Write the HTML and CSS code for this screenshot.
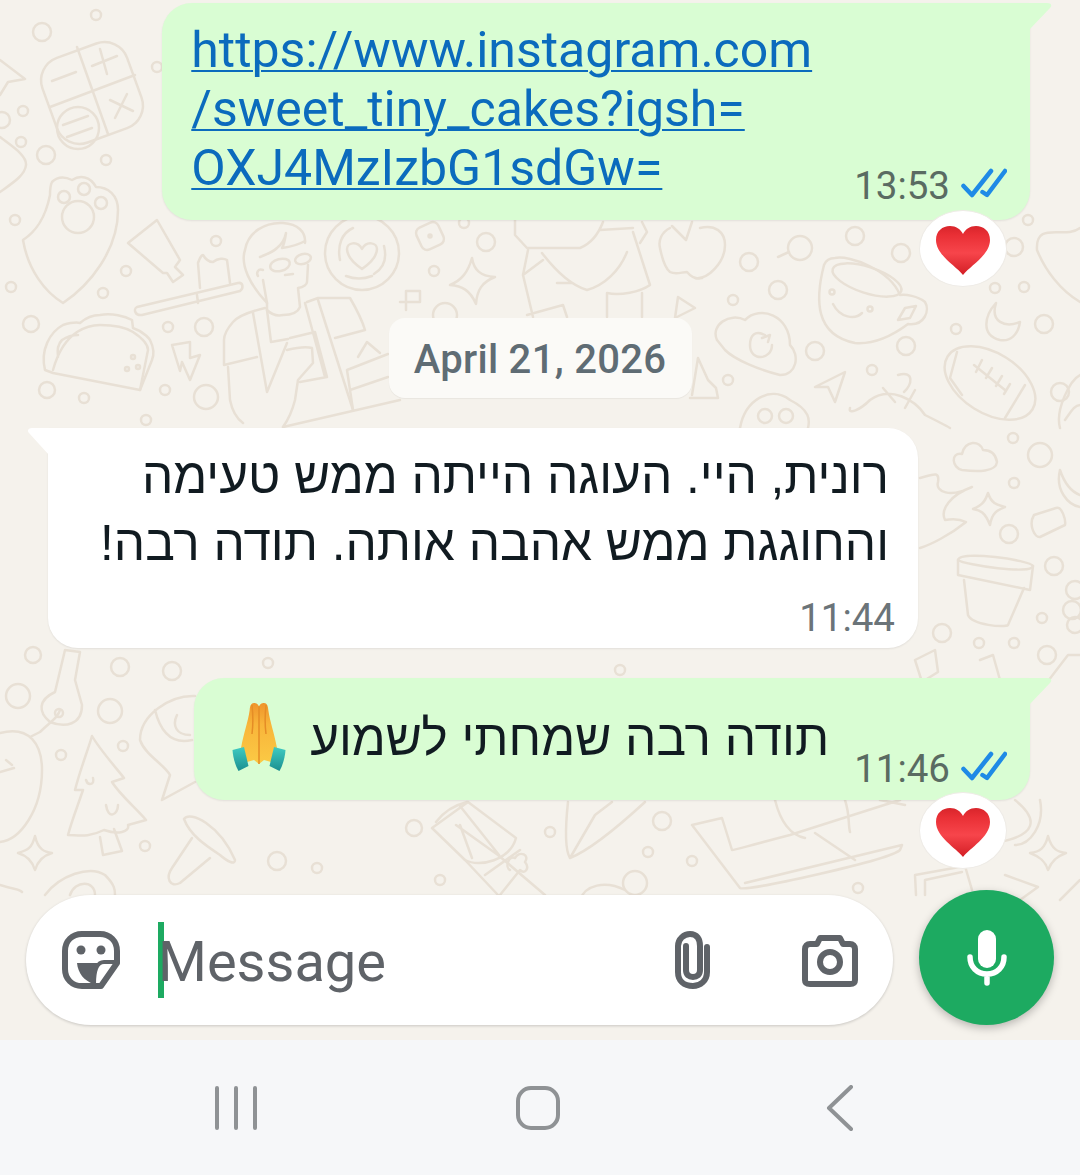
FILE: index.html
```html
<!DOCTYPE html>
<html lang="en">
<head>
    <meta charset="UTF-8">
    <meta name="viewport" content="width=device-width, initial-scale=1.0">
    <title>Chat</title>
    <link rel="stylesheet" href="styles.css">
</head>
<body>
    <!-- Shared emoji -->
    <svg class="defs" width="0" height="0">
        <defs>
            <linearGradient id="heartFill" x1="0" y1="0" x2="0" y2="1">
                <stop offset="0" stop-color="#d8252b"/>
                <stop offset="0.18" stop-color="#e92f35"/>
                <stop offset="0.55" stop-color="#f7454b"/>
                <stop offset="1" stop-color="#d31e25"/>
            </linearGradient>
            <linearGradient id="handFill" x1="0" y1="0" x2="0" y2="1">
                <stop offset="0" stop-color="#ef942b"/>
                <stop offset="0.35" stop-color="#f8b53a"/>
                <stop offset="1" stop-color="#fbca45"/>
            </linearGradient>
            <linearGradient id="cuffFill" x1="0" y1="0" x2="0" y2="1">
                <stop offset="0" stop-color="#3fcbc2"/>
                <stop offset="1" stop-color="#1c8f90"/>
            </linearGradient>
            <symbol id="heart" viewBox="0 0 56 50">
                <path fill="url(#heartFill)" d="M28 50C21 41 1 30 1 15C1 6 7.500 1 15 1C21 1 25.500 4 28 9C30.500 4 35 1 41 1C48.500 1 55 6 55 15C55 30 35 41 28 50Z"/>
            </symbol>
            <symbol id="ticks" viewBox="0 0 46 30">
                <path fill="none" stroke="#1f8ae6" stroke-width="4.500" stroke-linecap="round" stroke-linejoin="round" d="M2.500 18L11 27L30 3M21.500 24L26 27L44 3"/>
            </symbol>
        </defs>
    </svg>

    <div class="phone">
        <main class="chat">
            <!-- Wallpaper doodles -->
            <svg class="wallpaper" viewBox="0 0 1080 1040" width="1080" height="1040">
                <g class="dots">
                    <circle cx="42" cy="32" r="9"/><circle cx="96" cy="15" r="5"/><circle cx="23" cy="111" r="5"/><circle cx="21" cy="142" r="5"/><circle cx="46" cy="155" r="9"/><circle cx="106" cy="160" r="5"/><circle cx="157" cy="67" r="5"/><circle cx="2" cy="120" r="8"/>
                    <circle cx="15" cy="220" r="5"/><circle cx="11" cy="287" r="5"/><circle cx="103" cy="293" r="5"/><circle cx="126" cy="271" r="5"/><circle cx="216" cy="241" r="5"/><circle cx="31" cy="324" r="8"/><circle cx="168" cy="327" r="5"/><circle cx="204" cy="327" r="9"/><circle cx="47" cy="390" r="8"/><circle cx="84" cy="398" r="5"/><circle cx="165" cy="390" r="5"/><circle cx="206" cy="397" r="12"/><circle cx="146" cy="420" r="5"/><circle cx="78" cy="217" r="16"/>
                    <circle cx="749" cy="262" r="9"/><circle cx="855" cy="236" r="9"/><circle cx="800" cy="248" r="12"/><circle cx="901" cy="253" r="9"/><circle cx="1014" cy="247" r="9"/><circle cx="1028" cy="220" r="5"/><circle cx="778" cy="290" r="9"/><circle cx="733" cy="300" r="5"/><circle cx="995" cy="288" r="5"/><circle cx="1024" cy="287" r="5"/><circle cx="956" cy="329" r="5"/><circle cx="1044" cy="324" r="9"/><circle cx="815" cy="351" r="9"/><circle cx="906" cy="346" r="9"/><circle cx="872" cy="370" r="5"/><circle cx="728" cy="380" r="5"/><circle cx="1060" cy="392" r="9"/>
                    <circle cx="33" cy="655" r="8"/><circle cx="18" cy="696" r="12"/><circle cx="120" cy="667" r="9"/><circle cx="172" cy="671" r="9"/><circle cx="268" cy="663" r="5"/><circle cx="110" cy="711" r="12"/><circle cx="123" cy="746" r="5"/><circle cx="61" cy="755" r="5"/><circle cx="145" cy="846" r="5"/><circle cx="277" cy="861" r="9"/><circle cx="317" cy="868" r="5"/>
                    <circle cx="414" cy="828" r="8"/><circle cx="550" cy="832" r="5"/><circle cx="662" cy="821" r="9"/><circle cx="648" cy="852" r="5"/><circle cx="692" cy="861" r="5"/><circle cx="440" cy="880" r="5"/><circle cx="635" cy="883" r="12"/><circle cx="858" cy="888" r="5"/>
                    <circle cx="1040" cy="455" r="12"/><circle cx="1013" cy="438" r="5"/><circle cx="1014" cy="483" r="5"/><circle cx="1009" cy="534" r="9"/><circle cx="1054" cy="566" r="9"/><circle cx="942" cy="633" r="9"/><circle cx="1042" cy="618" r="5"/><circle cx="979" cy="643" r="5"/><circle cx="1014" cy="643" r="5"/><circle cx="1047" cy="655" r="9"/>
                    <circle cx="1075" cy="590" r="9"/><circle cx="1072" cy="610" r="9"/><circle cx="1075" cy="625" r="8"/>
                    <circle cx="480" cy="690" r="9"/><circle cx="620" cy="670" r="5"/>
                    <circle cx="486" cy="242" r="9"/><circle cx="464" cy="223" r="5"/><circle cx="434" cy="271" r="5"/><circle cx="445" cy="315" r="12"/>
                </g>
                <!-- calculator -->
                <rect x="47" y="48" width="90" height="90" rx="24" transform="rotate(-20 92 93)"/>
                <path d="M77 47L108 134M50 107L135 75M52 81L76 72M92 66L117 56M100 49L107 74M110 100L133 111M115 118L127 94M63 125L88 116M67 137L92 128"/>
                <circle cx="78" cy="128" r="21"/>
                <!-- paw + shield -->
                <path d="M50 195C45 220 35 232 23 240C28 270 45 292 63 303C90 285 118 250 118 210C118 195 108 187 96 187C90 176 80 175 72 180C66 177 58 176 52 182C50 186 50 190 50 195Z"/>
                <circle cx="64" cy="197" r="6"/><circle cx="84" cy="189" r="6"/><circle cx="101" cy="203" r="6"/>
                <path d="M0 192C14 182 25 175 26 165C27 155 10 145 0 137M0 60L25 79L8 82L0 95"/>
                <!-- tube and tray -->
                <path d="M128 243L157 220L180 260L175 267L183 275L173 282L167 273L163 273Z"/>
                <path d="M137 307L238 283C243 282 244 288 240 291L142 315C135 316 133 309 137 307ZM197 295L198 303"/>
                <path d="M200 288L198 263C200 257 202 255 203 255C206 260 209 262 213 262C218 258 224 258 227 260L230 283"/>
                <!-- person -->
                <path d="M267 303C250 285 240 265 245 250C248 232 265 222 283 223C298 224 306 232 305 243"/>
                <path d="M260 257C268 254 273 252 277 248C282 244 285 238 286 233C285 240 284 245 282 248C290 247 298 245 305 241"/>
                <ellipse cx="280" cy="265" rx="10" ry="6" transform="rotate(-15 280 265)"/>
                <ellipse cx="303" cy="259" rx="8" ry="5" transform="rotate(-15 303 259)"/>
                <path d="M263 280L267 303V310C272 315 278 316 283 315C292 315 298 312 300 307L298 288C304 287 307 284 307 282L308 265M285 275L293 274M263 270C258 268 256 273 258 276"/>
                <path d="M265 308C248 312 238 316 233 322C226 330 224 335 224 340V365L257 357M228 367L230 400C232 410 236 418 243 423M253 313L267 392L287 343M267 310L271 342L288 339"/>
                <path d="M290 338L315 332L327 377L300 382M287 350C295 348 305 346 312 348L313 363L298 380L295 400C292 412 288 420 283 427M307 302L318 298H350C357 310 362 320 365 330L335 338M318 300L353 410M305 303L325 377"/>
                <path d="M347 370L388 354M350 390L388 377M283 427L400 400M347 370L353 410M358 357L367 342L380 353"/>
                <!-- latte heart -->
                <circle cx="362" cy="253" r="37"/>
                <path d="M362 269C352 262 347 255 347 249C347 243 357 240 362 249C367 240 377 243 377 249C377 255 372 262 362 269ZM340 260C337 245 342 233 353 228M384 246C387 258 384 268 374 274M346 276C354 279 364 279 372 276"/>
                <!-- taco -->
                <path d="M45 370C40 350 50 332 63 325C70 323 76 322 80 323C88 316 95 315 100 315C112 313 125 316 132 320L133 328C145 332 150 340 150 340C154 348 154 355 152 360L140 390L53 373Z"/>
                <path d="M53 370C58 352 65 340 77 332C85 327 92 325 100 325C115 325 125 327 133 332C142 338 148 345 148 350L140 390M58 357C57 350 58 344 62 340C68 336 74 335 78 335"/>
                <circle cx="133" cy="357" r="2"/><circle cx="127" cy="369" r="2"/><circle cx="138" cy="367" r="2"/>
                <path d="M172 345L190 342L190 358L200 355L190 380L182 362L180 371Z"/>
                <!-- middle of the wall -->
                <rect x="418" y="224" width="24" height="24" rx="6" transform="rotate(-25 430 236)"/>
                <circle cx="430" cy="236" r="1.500"/>
                <path d="M472 258C474 270 480 276 495 277C482 282 477 290 476 304C470 290 462 286 450 285C462 280 468 272 472 258Z"/>
                <path d="M400 302H420V291H406V310"/>
                <path d="M515 220V235L527 248H560L580 248C590 244 598 235 603 222M528 250L523 275L533 317M543 260L523 275M542 253C555 270 570 285 587 290C605 285 620 270 627 252M557 283H572M633 232L650 285C640 292 620 296 607 293V317M642 293V317M600 230L633 228M642 222L647 232L640 243M527 315L563 305L567 317"/>
                <path d="M670 228C662 232 658 240 660 248C662 258 665 268 670 272C676 275 682 272 687 272C692 278 698 279 702 278M672 226L686 240L692 222"/>
                <path d="M678 297L695 308L675 318Z"/>
                <!-- cup, cloud, moon, football -->
                <path d="M700 228C715 224 725 232 725 245C725 262 708 280 695 278"/>
                <path d="M778 257L789 252"/>
                <path d="M824 265C815 300 815 335 855 343C880 345 900 330 908 324C925 326 930 310 925 302C918 296 905 294 900 295C890 270 850 255 835 258C830 258 826 260 824 265Z"/>
                <ellipse cx="867" cy="280" rx="36" ry="13" transform="rotate(18 867 280)"/>
                <circle cx="832" cy="292" r="2.500"/><circle cx="870" cy="309" r="2.500"/>
                <path d="M833 304C840 318 855 320 862 313M898 320L905 308L916 306L910 318Z"/>
                <path d="M717 340C710 325 730 312 745 320C760 305 790 315 790 345C800 355 797 375 780 375C760 370 735 360 725 350Z"/>
                <path d="M772 345C772 360 750 362 750 345C750 335 755 330 765 335M762 338L770 335L768 342"/>
                <path d="M996 303C985 315 980 335 1000 340C1010 342 1018 335 1020 322C1005 328 990 322 996 303Z"/>
                <ellipse cx="990" cy="383" rx="50" ry="30" transform="rotate(32 990 383)"/>
                <path d="M957 352L950 378L962 395M1025 385L1005 418M974 365L1005 390M982 360L976 372M992 368L986 378M1002 376L996 386M1010 384L1004 394"/>
                <path d="M815 387L845 372L835 402L828 387Z"/>
                <path d="M1080 228C1065 240 1035 220 1037 250C1045 270 1060 290 1080 302"/>
                <path d="M692 395L698 358L708 380L716 388L718 398H690"/>
                <path d="M740 428C745 400 770 385 790 400C810 410 810 420 808 428"/>
                <circle cx="765" cy="416" r="7"/><circle cx="786" cy="416" r="7"/>
                <path d="M850 408C848 415 860 410 870 400C890 385 915 400 925 415C935 420 945 425 950 428M898 375C915 370 912 385 904 392M883 388L895 402M915 390L905 408"/>
                <path d="M1060 428C1055 410 1070 380 1080 375M1065 420C1072 410 1075 405 1080 405"/>
                <!-- right edge -->
                <path d="M962 454C950 452 952 468 962 470C978 472 996 472 997 462C995 450 985 450 983 450C980 440 965 440 962 454Z"/>
                <path d="M988 493C992 505 998 505 1005 507C998 510 992 512 990 525C985 512 980 510 973 509C982 505 985 502 988 493Z"/>
                <path d="M1034 515L1056 508C1062 506 1066 520 1065 525L1040 537C1035 538 1028 525 1034 515Z"/>
                <path d="M958 560C960 550 1030 560 1033 566C1032 575 965 565 958 560Z"/>
                <path d="M958 560L958 575L1030 590L1033 566M964 580L968 615C972 625 1005 628 1008 625L1024 588"/>
                <path d="M920 478C932 475 940 470 938 482C935 492 950 498 972 487C950 495 940 510 945 520C955 518 962 520 966 522C950 535 930 545 920 548"/>
                <path d="M1060 470C1055 490 1068 505 1080 507M1060 470C1065 485 1072 492 1080 495"/>
                <path d="M915 660L935 650L938 672L922 682ZM980 660L993 655L1000 680M1045 685L1068 655H1080"/>
                <!-- key and avocado, tree, shrimp, mushroom -->
                <path d="M65 650L80 652L75 680L82 705C82 725 65 728 50 722C38 712 38 700 55 692Z"/>
                <path d="M60 710C58 718 50 722 40 732L30 737M0 733C30 725 42 745 42 770C42 810 20 840 0 842M0 772L14 768M6 760L12 765"/>
                <circle cx="59" cy="713" r="4"/>
                <path d="M92 736C100 750 118 770 124 778L112 782C120 795 138 810 146 820L128 825C130 832 118 835 104 830C88 838 78 835 68 835C72 820 78 805 83 790L75 790C80 770 88 750 92 736Z"/>
                <path d="M100 837L103 855L122 851L114 829M86 780C88 786 95 785 93 778M106 805C108 820 118 815 118 805"/>
                <path d="M195 696C170 695 140 715 140 740C145 755 165 765 170 775L162 800L195 782M155 710C160 730 170 745 192 740M177 715C172 725 176 735 190 735"/>
                <path d="M184 819C190 810 220 825 235 860C235 865 228 862 220 855C205 845 190 835 184 819Z"/>
                <path d="M192 838L172 868C165 878 170 888 180 883L210 858"/>
                <path d="M35 836C38 850 45 852 52 853C45 855 38 860 35 870C32 860 25 855 18 853C28 850 32 848 35 836Z"/>
                <path d="M0 885C15 890 18 888 22 892M45 895C60 875 90 865 105 875C115 885 115 890 115 895M70 895C75 880 95 880 95 895"/>
                <!-- drum, leaf, laptop -->
                <path d="M432 828L468 802L516 838C510 860 480 868 465 860Z"/>
                <path d="M436 822C445 810 455 805 467 802M460 806L499 855M456 825L498 855M460 825L472 858M465 860L498 895M498 855L545 895M485 875L520 850"/>
                <path d="M568 802C565 830 565 850 570 858C590 850 620 825 645 802M570 858L595 815M595 815L612 802"/>
                <path d="M692 825L722 818L732 850C735 850 740 848 790 835L900 800M692 825L740 888C745 892 890 860 900 850L902 845L745 883M815 833L855 860M775 800C780 820 790 835 805 838M845 800C850 815 848 825 850 832M905 805L880 800"/>
                <path d="M1048 836C1052 850 1058 852 1066 853C1058 856 1052 860 1048 870C1045 860 1038 856 1030 853C1040 852 1045 848 1048 836Z"/>
                <path d="M1015 800C1040 820 1035 835 1000 842M1040 800C1045 825 1030 845 1015 845"/>
                <path d="M916 895L915 875L965 866L972 890M925 895L925 880L962 872"/>
                <path d="M1005 875L1038 887L1020 900M1080 880L1060 900"/>
                <path d="M580 900C585 885 605 880 625 890"/>
                <path d="M500 895L520 870C525 875 530 868 525 862C530 855 520 850 515 858C508 855 505 868 510 870"/>
            </svg>

            <div class="messages">
                <div class="row row-out">
                    <div class="bubble bubble-out bubble-link">
                        <a class="link" href="#">https://www.instagram.com<br>/sweet_tiny_cakes?igsh=<br>OXJ4MzIzbG1sdGw=</a>
                        <div class="meta">
                            <span class="time">13:53</span>
                            <svg class="ticks"><use href="#ticks"/></svg>
                        </div>
                    </div>
                    <div class="reaction"><svg class="heart"><use href="#heart"/></svg></div>
                </div>

                <div class="date">April 21, 2026</div>

                <div class="row row-in">
                    <div class="bubble bubble-in">
                        <p class="text" dir="rtl">רונית, היי. העוגה הייתה ממש טעימה<br>והחוגגת ממש אהבה אותה. תודה רבה!</p>
                        <div class="time time-in">11:44</div>
                    </div>
                </div>

                <div class="row row-out">
                    <div class="bubble bubble-out bubble-short">
                        <svg class="pray" viewBox="0 0 54 70">
                            <path fill="url(#handFill)" d="M27 6C27 2 24 1 22 1C19 1 18 4 17.700 8C16 20 12 30 9 46L15 60L22 58L27 62Z"/>
                            <path fill="url(#handFill)" d="M27 6C27 2 30 1 32 1C35 1 36 4 36.300 8C38 20 42 30 45 46L39 60L32 58L27 62Z"/>
                            <path fill="none" stroke="#e58d26" stroke-width="1.500" d="M27 4V62M20 3C21 12 21 24 20 32M34 3C33 12 33 24 34 32"/>
                            <path fill="url(#cuffFill)" d="M0.500 48L12 45L16.500 64L6.500 69C3 63 1 55 0.500 48Z"/>
                            <path fill="url(#cuffFill)" d="M53.500 48L42 45L37.500 64L47.500 69C51 63 53 55 53.500 48Z"/>
                        </svg>
                        <p class="text text-short" dir="rtl">תודה רבה שמחתי לשמוע</p>
                        <div class="meta">
                            <span class="time">11:46</span>
                            <svg class="ticks"><use href="#ticks"/></svg>
                        </div>
                    </div>
                    <div class="reaction reaction-last"><svg class="heart"><use href="#heart"/></svg></div>
                </div>
            </div>

            <div class="composer">
                <div class="input">
                    <svg class="icon icon-sticker" viewBox="0 0 58 58">
                        <path class="stroke" d="M20 3H38C48 3 55 10 55 20V32L39 55H20C10 55 3 48 3 38V20C3 10 10 3 20 3Z"/>
                        <path class="stroke-thin" d="M55 31H42C36 31 32 38 32 53"/>
                        <circle class="fill" cx="19" cy="19" r="4.500"/>
                        <circle class="fill" cx="39" cy="19" r="4.500"/>
                        <path class="fill" d="M15 32H42C36 32 32 40 32 53C22 50 16 42 15 32Z"/>
                    </svg>
                    <span class="caret"></span>
                    <span class="placeholder">Message</span>
                    <svg class="icon icon-clip" viewBox="0 0 39 58">
                        <path class="stroke" d="M34 16V41C34 50 27 55 20 55C11 55 5 50 5 41V15C5 8 11 3 17 3C24 3 27 8 27 15V39C27 44 24 46 20 46C16 46 13 44 13 39V15"/>
                    </svg>
                    <svg class="icon icon-camera" viewBox="0 0 56 53">
                        <path class="stroke" d="M3 15C3 12 5 10 8 10H15L18 4H38L41 10H48C51 10 53 12 53 15V46C53 49 51 50 48 50H8C5 50 3 49 3 46Z"/>
                        <circle class="stroke" cx="28" cy="28" r="10"/>
                    </svg>
                </div>
                <button class="mic">
                    <svg class="icon-mic" viewBox="0 0 40 56">
                        <rect x="11" y="0" width="18" height="38" rx="9" fill="#fff"/>
                        <path fill="none" stroke="#fff" stroke-width="5.500" stroke-linecap="round" d="M3 27C3 37 10 44 20 44C30 44 37 37 37 27M20 44V53"/>
                    </svg>
                </button>
            </div>
        </main>

        <!-- System navigation -->
        <nav class="sysnav">
            <svg class="nav-icon" viewBox="0 0 44 44" width="44" height="44">
                <path d="M3 2V42M22 2V42M41 2V42"/>
            </svg>
            <svg class="nav-icon" viewBox="0 0 44 44" width="44" height="44">
                <rect x="2" y="2" width="40" height="40" rx="13"/>
            </svg>
            <svg class="nav-icon" viewBox="0 0 28 46" width="28" height="46">
                <path d="M25 2L3 23L25 44"/>
            </svg>
        </nav>
    </div>
</body>
</html>
```

FILE: styles.css
```css
:root {
    --wall: #f5f2ec;
    --doodle: #e8e0d5;
    --out: #d9fdd3;
    --ink: #111b21;
    --meta: #5a6b62;
    --icon: #5f6368;
    --green: #1daa61;
}

* {
    margin: 0;
    padding: 0;
    box-sizing: border-box;
}

body {
    font-family: Roboto, "Liberation Sans", sans-serif;
    background: var(--wall);
    color: var(--ink);
    overflow: hidden;
}

.defs {
    position: absolute;
}

.phone {
    width: 1080px;
    height: 1175px;
    display: flex;
    flex-direction: column;
}

/* Chat area */
.chat {
    position: relative;
    height: 1040px;
    background: var(--wall);
    display: flex;
    flex-direction: column;
    justify-content: space-between;
    padding-bottom: 15px;
    overflow: hidden;
}

.wallpaper {
    position: absolute;
    top: 0;
    left: 0;
}

.wallpaper path,
.wallpaper rect,
.wallpaper circle,
.wallpaper ellipse {
    fill: none;
    stroke: var(--doodle);
    stroke-width: 2.5;
    stroke-linecap: round;
    stroke-linejoin: round;
}

.messages {
    position: relative;
    padding-top: 3px;
    display: flex;
    flex-direction: column;
}

.row {
    display: flex;
    flex-direction: column;
}

.row-out {
    align-items: flex-end;
    padding-right: 50px;
}

.row-in {
    align-items: flex-start;
    padding-left: 48px;
    margin-top: 30px;
}

.bubble {
    position: relative;
    border-radius: 30px;
    box-shadow: 0 1px 2px rgba(0, 0, 0, 0.08);
}

.bubble-out {
    background: var(--out);
    border-top-right-radius: 0;
    display: flex;
    justify-content: space-between;
}

.bubble-out::after {
    content: '';
    position: absolute;
    top: 0;
    right: -22px;
    width: 23px;
    height: 27px;
    background: var(--out);
    clip-path: path("M0 0H18C23 0 23 3 21 5L0 27Z");
}

.bubble-in {
    width: 870px;
    height: 220px;
    background: #fff;
    border-top-left-radius: 0;
    padding: 14px 29px 0 30px;
}

.bubble-in::after {
    content: '';
    position: absolute;
    top: 0;
    left: -20px;
    width: 21px;
    height: 27px;
    background: #fff;
    clip-path: path("M21 0H4C0 0 -1 3 1 5L21 27Z");
}

.bubble-link {
    padding: 18px 23px 12px 29px;
    gap: 42px;
    height: 217px;
}

.bubble-short {
    height: 122px;
    padding: 0 23px 9px 38px;
    margin-top: 30px;
}

.link {
    font-size: 50px;
    line-height: 59px;
    color: #0b6bbd;
    text-decoration: underline;
    text-decoration-thickness: 2px;
    text-underline-offset: 3px;
}

.text {
    font-family: "Liberation Sans", sans-serif;
    font-size: 49.5px;
    line-height: 67px;
    color: var(--ink);
}

.text-short {
    line-height: 120px;
    margin-left: 24px;
    margin-right: 25px;
    height: 118px;
}

.meta {
    display: flex;
    align-items: flex-end;
    gap: 11px;
    align-self: flex-end;
}

.time {
    font-size: 38.5px;
    line-height: 44px;
    color: var(--meta);
}

.time-in {
    text-align: right;
    margin-right: -6px;
    margin-top: 20px;
    color: #6b7479;
}

.ticks {
    width: 46px;
    height: 30px;
    margin-bottom: 10px;
}

.pray {
    width: 54px;
    height: 70px;
    margin-top: 24px;
    flex-shrink: 0;
}

.reaction {
    width: 88px;
    height: 77px;
    margin-top: -10px;
    margin-right: 23px;
    padding-top: 3px;
    border-radius: 50%;
    background: #fff;
    border: 1px solid #eeebe6;
    position: relative;
    display: flex;
    align-items: center;
    justify-content: center;
}

.reaction-last {
    margin-top: -8px;
}

.heart {
    width: 56px;
    height: 50px;
}

.date {
    position: relative;
    align-self: center;
    width: 303px;
    height: 80px;
    margin-top: 31px;
    border-radius: 16px;
    background: #fbfaf7;
    box-shadow: 0 1px 1px rgba(0, 0, 0, 0.05);
    text-align: center;
    font-size: 40px;
    font-weight: 500;
    letter-spacing: 0.3px;
    line-height: 84px;
    color: #5f6c74;
}

/* Composer */
.composer {
    position: relative;
    display: flex;
    align-items: flex-end;
    gap: 26px;
    padding-left: 26px;
}

.input {
    width: 867px;
    height: 130px;
    border-radius: 65px;
    background: #fff;
    box-shadow: 0 1px 3px rgba(0, 0, 0, 0.18);
    display: flex;
    align-items: center;
    padding: 0 35px 0 36px;
}

.icon {
    flex-shrink: 0;
}

.icon .stroke {
    fill: none;
    stroke: var(--icon);
    stroke-width: 6;
    stroke-linejoin: round;
    stroke-linecap: round;
}

.icon .stroke-thin {
    fill: none;
    stroke: var(--icon);
    stroke-width: 4;
    stroke-linecap: round;
}

.icon .fill {
    fill: var(--icon);
}

.icon-sticker {
    width: 58px;
    height: 58px;
}

.icon-clip {
    width: 39px;
    height: 58px;
}

.icon-camera {
    width: 56px;
    height: 53px;
    margin-left: 90px;
}

.caret {
    width: 6px;
    height: 76px;
    margin-left: 38px;
    margin-right: -6px;
    background: var(--green);
}

.placeholder {
    flex: 1;
    padding-top: 4px;
    font-size: 56px;
    color: var(--icon);
}

.mic {
    width: 135px;
    height: 135px;
    border: none;
    border-radius: 50%;
    background: var(--green);
    box-shadow: 0 3px 8px rgba(0, 0, 0, 0.25);
    display: flex;
    align-items: center;
    justify-content: center;
}

.icon-mic {
    width: 40px;
    height: 56px;
}

/* System navigation */
.sysnav {
    flex: 1;
    background: #f6f7f9;
    display: grid;
    grid-template-columns: 236px 302px 302px;
    align-items: center;
    justify-content: start;
    padding-top: 1px;
}

.nav-icon {
    justify-self: end;
}

.nav-icon:nth-child(1),
.nav-icon:nth-child(2) {
    margin-right: -22px;
}

.nav-icon:nth-child(3) {
    margin-right: -14px;
}

.nav-icon path,
.nav-icon rect {
    fill: none;
    stroke: #8f9295;
    stroke-width: 4;
    stroke-linecap: round;
    stroke-linejoin: round;
}
```
